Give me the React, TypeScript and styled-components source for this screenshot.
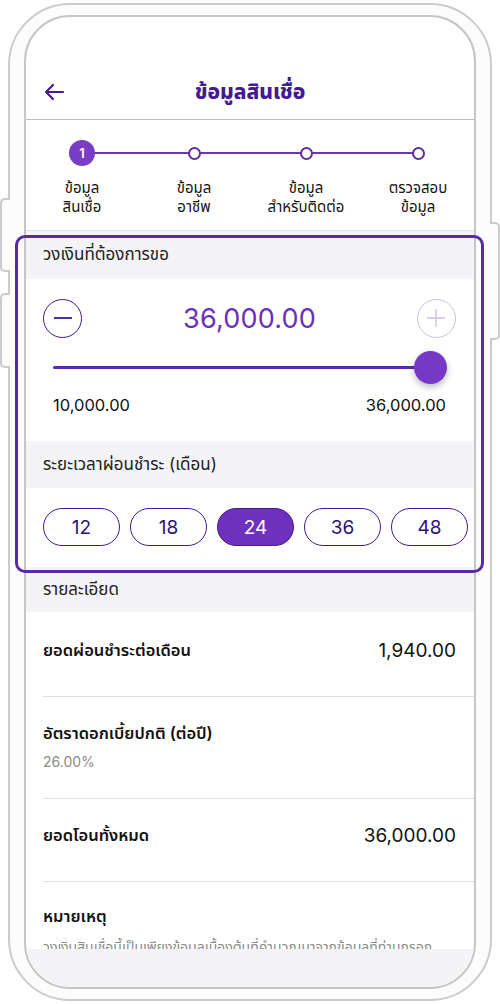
import React from 'react';
import styled, { createGlobalStyle } from 'styled-components';

const Global = createGlobalStyle`
  html, body { margin: 0; padding: 0; background: #ffffff; }
  body { font-family: Inter, "Noto Sans Thai", "Noto Sans", sans-serif; color: #1b1b1b; }
  * { box-sizing: border-box; }
`;

const Page = styled.div`
  width: 500px;
  height: 1004px;
  padding: 3px 8px 0 8px;
  overflow: hidden;
`;

const Phone = styled.div`
  position: relative;
  width: 484px;
  height: 998px;
  border: 2px solid #cbcbcb;
  border-radius: 62px;
  background: #fcfcfc;
  padding: 10px 14px;
`;

const SideButton = styled.div<{ $side: 'left' | 'right'; $top: number; $h: number }>`
  position: absolute;
  top: ${p => p.$top}px;
  height: ${p => p.$h}px;
  width: 10px;
  ${p => (p.$side === 'left' ? 'left: -10px;' : 'right: -10px;')}
  border: 2px solid #cbcbcb;
  ${p => (p.$side === 'left' ? 'border-right: none; border-radius: 5px 0 0 5px;' : 'border-left: none; border-radius: 0 5px 5px 0;')}
  background: #fcfcfc;
`;

const Screen = styled.div`
  height: 100%;
  border: 2px solid #c6c6c6;
  border-radius: 46px;
  overflow: hidden;
  background: #ffffff;
  display: flex;
  flex-direction: column;
`;

const Header = styled.div`
  flex: none;
  height: 103px;
  padding: 53px 17px 0 17px;
  border-bottom: 1px solid #bdbdbd;
`;

const HeaderRow = styled.div`
  height: 44px;
  display: grid;
  grid-template-columns: 40px 1fr 40px;
  align-items: center;
`;

const BackButton = styled.div`
  width: 22px;
  height: 22px;
  display: flex;
  align-items: center;
`;

const Title = styled.div`
  text-align: center;
  font-size: 21px;
  font-weight: 800;
  color: #441a93;
`;

const Body = styled.div`
  flex: 1;
  overflow: hidden;
`;

const Stepper = styled.div`
  display: grid;
  grid-template-columns: repeat(4, 1fr);
  padding: 20px 0 14px;
  border-bottom: 1px solid #e4e4e4;
`;

const Step = styled.div<{ $last?: boolean }>`
  position: relative;
  display: flex;
  flex-direction: column;
  align-items: center;
  &::after {
    content: '';
    display: ${p => (p.$last ? 'none' : 'block')};
    position: absolute;
    top: 12px;
    left: 50%;
    width: 100%;
    height: 2px;
    background: #6a34b6;
  }
`;

const Dot = styled.div`
  height: 26px;
  display: flex;
  align-items: center;
  justify-content: center;
  position: relative;
  z-index: 1;
`;

const DotActive = styled.div`
  width: 26px;
  height: 26px;
  border-radius: 50%;
  background: #7a3cc4;
  color: #fff;
  font-size: 13px;
  font-weight: 600;
  display: flex;
  align-items: center;
  justify-content: center;
`;

const DotIdle = styled.div`
  width: 13px;
  height: 13px;
  border-radius: 50%;
  background: #fff;
  border: 2px solid #5d2ca8;
`;

const StepLabel = styled.div`
  margin-top: 12px;
  font-size: 15px;
  line-height: 19px;
  text-align: center;
  color: #151515;
`;

const Band = styled.div<{ $h: number }>`
  height: ${p => p.$h}px;
  background: #f4f4f6;
  padding-left: 17px;
  display: flex;
  align-items: center;
  font-size: 17px;
  color: #222;
`;

const AmountBlock = styled.div`
  padding: 20px 18px 26px 17px;
`;

const AmountRow = styled.div`
  height: 38px;
  display: flex;
  align-items: center;
  justify-content: space-between;
`;

const RoundButton = styled.div<{ $muted?: boolean }>`
  width: 39px;
  height: 39px;
  border-radius: 50%;
  border: ${p => (p.$muted ? '1px solid #cdbfe6' : '1.5px solid #3e1a8c')};
  display: flex;
  align-items: center;
  justify-content: center;
`;

const Amount = styled.div`
  font-size: 27px;
  color: #6a2fbc;
  letter-spacing: 0.2px;
`;

const SliderRow = styled.div`
  margin-top: 14px;
  height: 33px;
  padding: 0 9px 0 10px;
  display: flex;
  align-items: center;
`;

const Track = styled.div`
  flex: 1;
  height: 3px;
  background: #5b2aa6;
  border-radius: 2px;
`;

const Thumb = styled.div`
  width: 33px;
  height: 33px;
  margin-left: -16px;
  border-radius: 50%;
  background: #7838c6;
  box-shadow: 0 3px 7px rgba(0, 0, 0, 0.28);
`;

const RangeLabels = styled.div`
  margin-top: 11px;
  height: 20px;
  padding: 0 10px;
  display: flex;
  justify-content: space-between;
  align-items: center;
  font-size: 16.5px;
  color: #111;
`;

const Pills = styled.div`
  padding: 20px 6px 21px 17px;
  display: grid;
  grid-template-columns: repeat(5, 77px);
  gap: 10px;
`;

const Pill = styled.div<{ $active?: boolean }>`
  height: 38px;
  border-radius: 19px;
  border: 1.5px solid #3e1a8c;
  background: ${p => (p.$active ? '#6f30bd' : '#fff')};
  color: ${p => (p.$active ? '#fff' : '#2e1275')};
  font-size: 19px;
  display: flex;
  align-items: center;
  justify-content: center;
`;

const Row = styled.div<{ $pt: number; $pb: number; $border?: boolean }>`
  margin-left: 17px;
  padding: ${p => p.$pt}px 18px ${p => p.$pb}px 0;
  border-bottom: ${p => (p.$border ? '1px solid #dedede' : 'none')};
`;

const RowLine = styled.div`
  height: 24px;
  display: flex;
  align-items: center;
  justify-content: space-between;
`;

const RowTitle = styled.div`
  font-size: 16.5px;
  font-weight: 600;
  color: #111;
`;

const RowValue = styled.div`
  font-size: 19px;
  color: #111;
`;

const RowSub = styled.div<{ $gap: number }>`
  margin-top: ${p => p.$gap}px;
  height: 20px;
  display: flex;
  align-items: center;
  font-size: 14px;
  color: #8a8a8a;
  white-space: nowrap;
`;

const BottomBar = styled.div`
  flex: none;
  height: 38px;
  background: #f4f4f6;
`;

const Highlight = styled.div`
  position: absolute;
  left: 5px;
  top: 230px;
  width: 469px;
  height: 338px;
  border: 3px solid #5a2aa3;
  border-radius: 10px;
  pointer-events: none;
`;

const steps = [
  ['ข้อมูล', 'สินเชื่อ'],
  ['ข้อมูล', 'อาชีพ'],
  ['ข้อมูล', 'สำหรับติดต่อ'],
  ['ตรวจสอบ', 'ข้อมูล'],
];

const terms = [12, 18, 24, 36, 48];

export default function App() {
  return (
    <>
      <Global />
      <Page>
        <Phone>
          <SideButton $side="left" $top={193} $h={74} />
          <SideButton $side="left" $top={288} $h={75} />
          <SideButton $side="right" $top={217} $h={118} />
          <Screen>
            <Header>
              <HeaderRow>
                <BackButton>
                  <svg width="22" height="18" viewBox="0 0 22 18" fill="none">
                    <path d="M20 9H3M10 2L3 9l7 7" stroke="#441a93" strokeWidth="2.2" strokeLinecap="round" strokeLinejoin="round" />
                  </svg>
                </BackButton>
                <Title>ข้อมูลสินเชื่อ</Title>
                <div />
              </HeaderRow>
            </Header>
            <Body>
              <Stepper>
                {steps.map((s, i) => (
                  <Step key={i} $last={i === steps.length - 1}>
                    <Dot>{i === 0 ? <DotActive>1</DotActive> : <DotIdle />}</Dot>
                    <StepLabel>
                      {s[0]}
                      <br />
                      {s[1]}
                    </StepLabel>
                  </Step>
                ))}
              </Stepper>
              <Band $h={48}>วงเงินที่ต้องการขอ</Band>
              <AmountBlock>
                <AmountRow>
                  <RoundButton>
                    <svg width="20" height="20" viewBox="0 0 20 20">
                      <path d="M1 10h18" stroke="#3e1a8c" strokeWidth="1.8" />
                    </svg>
                  </RoundButton>
                  <Amount>36,000.00</Amount>
                  <RoundButton $muted>
                    <svg width="22" height="22" viewBox="0 0 22 22">
                      <path d="M11 2v18M2 11h18" stroke="#cdbfe6" strokeWidth="1.4" />
                    </svg>
                  </RoundButton>
                </AmountRow>
                <SliderRow>
                  <Track />
                  <Thumb />
                </SliderRow>
                <RangeLabels>
                  <span>10,000.00</span>
                  <span>36,000.00</span>
                </RangeLabels>
              </AmountBlock>
              <Band $h={47}>ระยะเวลาผ่อนชำระ (เดือน)</Band>
              <Pills>
                {terms.map(t => (
                  <Pill key={t} $active={t === 24}>
                    {t}
                  </Pill>
                ))}
              </Pills>
              <Band $h={45}>รายละเอียด</Band>
              <Row $pt={26} $pb={34} $border>
                <RowLine>
                  <RowTitle>ยอดผ่อนชำระต่อเดือน</RowTitle>
                  <RowValue>1,940.00</RowValue>
                </RowLine>
              </Row>
              <Row $pt={24} $pb={27} $border>
                <RowLine>
                  <RowTitle>อัตราดอกเบี้ยปกติ (ต่อปี)</RowTitle>
                </RowLine>
                <RowSub $gap={6}>26.00%</RowSub>
              </Row>
              <Row $pt={24} $pb={34} $border>
                <RowLine>
                  <RowTitle>ยอดโอนทั้งหมด</RowTitle>
                  <RowValue>36,000.00</RowValue>
                </RowLine>
              </Row>
              <Row $pt={22} $pb={20}>
                <RowLine>
                  <RowTitle>หมายเหตุ</RowTitle>
                </RowLine>
                <RowSub $gap={9}>วงเงินสินเชื่อนี้เป็นเพียงข้อมูลเบื้องต้นที่คำนวณมาจากข้อมูลที่ท่านกรอก</RowSub>
              </Row>
            </Body>
            <BottomBar />
          </Screen>
          <Highlight />
        </Phone>
      </Page>
    </>
  );
}
